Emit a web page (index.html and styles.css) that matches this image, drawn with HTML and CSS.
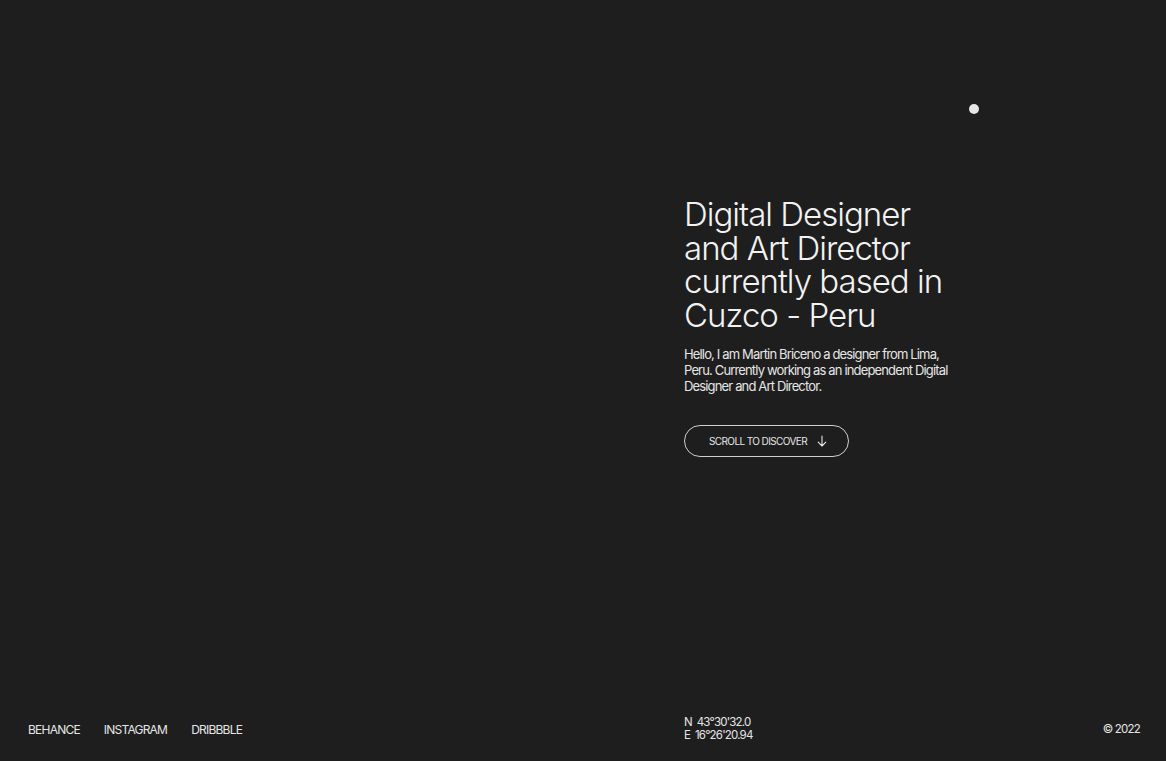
FILE: index.html
```html
<!DOCTYPE html>
<html lang="en">
<head>
<meta charset="utf-8">
<title>Martin Briceno</title>
<link rel="stylesheet" href="styles.css">
</head>
<body>
<div class="cursor"></div>
<main class="hero">
  <div class="hero-spacer"></div>
  <section class="intro">
    <h1 class="title">Digital Designer<br>and Art Director<br>currently based in<br>Cuzco - Peru</h1>
    <p class="lead">Hello, I am Martin Briceno a designer from Lima, Peru. Currently working as an independent Digital Designer and Art Director.</p>
    <a class="scroll-btn" href="#">SCROLL TO DISCOVER
      <svg class="arrow" width="10" height="12" viewBox="0 0 10 12" fill="none" stroke="currentColor" stroke-width="1.1" stroke-linecap="round" stroke-linejoin="round"><path d="M5 1v10M1.2 7.2 5 11l3.8-3.8"/></svg>
    </a>
  </section>
</main>
<footer class="footer">
  <nav class="social">
    <a href="#">BEHANCE</a>
    <a href="#">INSTAGRAM</a>
    <a href="#">DRIBBBLE</a>
  </nav>
  <div class="coords">
    <span>N&nbsp; 43°30'32.0</span>
    <span>E&nbsp; 16°26'20.94</span>
  </div>
  <div class="copy">© 2022</div>
</footer>
</body>
</html>
```
FILE: styles.css
```css
* { box-sizing: border-box; }
html, body { height: 100%; }
body {
  margin: 0;
  background: #1e1e1e;
  color: #ececec;
  font-family: "Inter", "Liberation Sans", sans-serif;
  display: flex;
  flex-direction: column;
  padding: 0 26px 0 28px;
  overflow: hidden;
}
a { color: inherit; text-decoration: none; }

.cursor {
  position: absolute;
  left: 969px;
  top: 104px;
  width: 10px;
  height: 10px;
  border-radius: 50%;
  background: #e6e6e6;
}

.hero {
  flex: 1;
  display: grid;
  grid-template-columns: 656px 1fr;
}
.intro {
  padding-top: 198px;
  width: 275px;
}
.title {
  margin: 0;
  font-weight: 300;
  font-size: 33px;
  line-height: 33.5px;
  letter-spacing: -0.03em;
  color: #f2f2f2;
}
.lead {
  margin: 14px 0 0;
  font-size: 13px;
  line-height: 16px;
  letter-spacing: -0.065em;
  color: #e6e6e6;
}
.scroll-btn {
  margin-top: 31px;
  display: inline-flex;
  align-items: center;
  gap: 10px;
  height: 32px;
  width: 165px;
  padding-left: 24px;
  border: 1px solid #cfcfcf;
  border-radius: 16px;
  font-size: 10px;
  letter-spacing: -0.06em;
  color: #e6e6e6;
}

.footer {
  display: grid;
  grid-template-columns: 656px 1fr auto;
  align-items: center;
  height: 58px;
  padding-bottom: 6px;
  font-size: 12px;
  letter-spacing: -0.065em;
  color: #e6e6e6;
}
.social { display: flex; gap: 24px; }
.coords {
  display: flex;
  flex-direction: column;
  font-size: 11.5px;
  line-height: 13px;
  letter-spacing: -0.07em;
}
.copy { font-size: 11.5px; }
```
